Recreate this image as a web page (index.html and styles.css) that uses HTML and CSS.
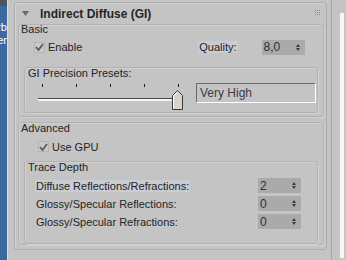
FILE: index.html
```html
<!DOCTYPE html>
<html lang="en">
<head>
    <meta charset="UTF-8">
    <title>Indirect Diffuse (GI)</title>
    <link rel="stylesheet" href="styles.css">
</head>
<body>
    <div class="side">
        <div class="side-top"></div>
        <span class="side-text t1">Verb</span>
        <span class="side-text t2">Ser</span>
    </div>
    <div class="main">
        <div class="rollout">
            <div class="roll-head">
                <svg class="arrow" width="7" height="5" viewBox="0 0 7 5"><path d="M0 0h7L3.5 5z" fill="#6a6a6a"/></svg>
                <span class="roll-title">Indirect Diffuse (GI)</span>
                <svg class="grip" width="6" height="6" viewBox="0 0 6 6" fill="#8c8c8c">
                    <rect x="0" y="0" width="1" height="1"/><rect x="2" y="0" width="1" height="1"/><rect x="4" y="0" width="1" height="1"/>
                    <rect x="0" y="2" width="1" height="1"/><rect x="2" y="2" width="1" height="1"/><rect x="4" y="2" width="1" height="1"/>
                    <rect x="0" y="4" width="1" height="1"/><rect x="2" y="4" width="1" height="1"/><rect x="4" y="4" width="1" height="1"/>
                </svg>
            </div>

            <div class="group basic">
                <div class="group-title">Basic</div>
                <div class="row">
                    <label class="check enable">
                        <span class="box"><svg width="9" height="8" viewBox="0 0 9 8"><path d="M1 4l2.5 3L8 1" stroke="#5a5a5a" stroke-width="1.8" fill="none"/></svg></span>
                        Enable
                    </label>
                    <span class="label hl quality">Quality:</span>
                    <span class="spinner">8,0<span class="updown"><i class="up"></i><i class="down"></i></span></span>
                </div>
                <div class="group presets">
                    <div class="group-title">GI Precision Presets:</div>
                    <div class="preset-row">
                        <div class="slider">
                            <div class="ticks"><i></i><i></i><i></i><i></i><i></i></div>
                            <div class="track"></div>
                            <svg class="thumb" width="11" height="20" viewBox="0 0 11 20">
                                <path d="M0.5 19.5V5.5L5.5 0.5L10.5 5.5V19.5Z" fill="#d8d4cb" stroke="#3a3a3a"/>
                                <path d="M1.5 18.5V6L5.5 2" stroke="#ffffff" fill="none"/>
                            </svg>
                        </div>
                        <div class="textbox">Very High</div>
                    </div>
                </div>
            </div>

            <div class="group advanced">
                <div class="group-title">Advanced</div>
                <label class="check gpu">
                    <span class="box"><svg width="9" height="8" viewBox="0 0 9 8"><path d="M1 4l2.5 3L8 1" stroke="#5a5a5a" stroke-width="1.8" fill="none"/></svg></span>
                    Use GPU
                </label>
                <div class="group trace">
                    <div class="group-title">Trace Depth</div>
                    <div class="trace-rows">
                        <div class="trace-row">
                            <span class="label hl">Diffuse Reflections/Refractions:</span>
                            <span class="spinner">2<span class="updown"><i class="up"></i><i class="down"></i></span></span>
                        </div>
                        <div class="trace-row">
                            <span class="label">Glossy/Specular Reflections:</span>
                            <span class="spinner">0<span class="updown"><i class="up"></i><i class="down"></i></span></span>
                        </div>
                        <div class="trace-row">
                            <span class="label">Glossy/Specular Refractions:</span>
                            <span class="spinner">0<span class="updown"><i class="up"></i><i class="down"></i></span></span>
                        </div>
                    </div>
                </div>
            </div>
        </div>
    </div>
    <div class="scroll">
        <div class="scroll-thumb"></div>
    </div>
</body>
</html>
```

FILE: styles.css
```css
body {
    margin: 0;
    width: 346px;
    height: 260px;
    display: flex;
    background: #c4c4c4;
    font-family: "Liberation Sans", Arial, sans-serif;
    font-size: 11px;
    color: #222428;
    overflow: hidden;
}
.side {
    position: relative;
    width: 7px;
    flex: none;
    background: #3b6aa0;
    border-right: 1px solid #dcdcdc;
    overflow: hidden;
}
.side-top {
    height: 6px;
    background: #4b5562;
}
.side-text {
    position: absolute;
    right: 0;
    color: #ffffff;
    font-size: 11px;
    white-space: nowrap;
}
.t1 { top: 21px; }
.t2 { top: 34px; }
.main {
    flex: 1;
    padding: 2px 0 0 6px;
}
.rollout {
    height: 246px;
    border: 1px solid #adadad;
    border-radius: 3px;
    box-shadow: inset 1px 1px 0 #d2d2d2;
    padding: 0 2px 0 3px;
}
.roll-head {
    height: 21px;
    display: flex;
    align-items: center;
    padding-left: 4px;
}
.arrow { margin-right: 11px; margin-top: -1px; }
.roll-title {
    font-weight: bold;
    font-size: 12px;
    color: #262626;
    flex: 1;
}
.grip { margin-right: 3px; margin-top: -2px; }

.group {
    border: 1px solid #b2b2b2;
    border-radius: 3px;
    box-shadow: inset 1px 1px 0 #d0d0d0, 1px 1px 0 #d0d0d0;
}
.group-title {
    height: 11px;
    line-height: 11px;
    padding-left: 2px;
}
.basic {
    height: 91px;
}
.basic > .group-title { margin-top: -1px; }
.row {
    display: flex;
    align-items: center;
    height: 16px;
    margin-top: 4px;
}
.check {
    display: flex;
    align-items: center;
}
.box {
    width: 9px;
    height: 9px;
    margin-right: 3px;
    display: flex;
    align-items: center;
    justify-content: center;
    background: #c9c9c9;
    border: 1px solid #b4b4b4;
}
.enable { margin-left: 15px; }
.label { padding: 0 1px; }
.hl { background: #c9ccd2; }
.quality { margin-left: 116px; }
.spinner {
    display: flex;
    align-items: center;
    justify-content: space-between;
    width: 43px;
    height: 15px;
    padding-left: 2px;
    box-sizing: border-box;
    background: #aaaaaa;
    color: #2e2e34;
    font-size: 12px;
}
.row .spinner { margin-left: 24px; }
.updown {
    display: flex;
    flex-direction: column;
    gap: 1px;
    margin-right: 5px;
}
.updown i {
    width: 0;
    height: 0;
    border-left: 2.5px solid transparent;
    border-right: 2.5px solid transparent;
}
.updown .up { border-bottom: 3px solid #3c3c3c; }
.updown .down { border-top: 3px solid #3c3c3c; }

.presets {
    height: 44px;
    margin: 12px 5px 0 5px;
}
.presets > .group-title { padding-left: 3px; }
.preset-row {
    display: flex;
    margin-top: 5px;
}
.slider {
    position: relative;
    width: 150px;
    margin-left: 11px;
    height: 28px;
}
.ticks {
    display: flex;
    justify-content: space-between;
    padding: 0 7px 0 6px;
}
.ticks i {
    width: 1px;
    height: 3px;
    background: #1c1c1c;
}
.track {
    margin: 11px 8px 0 2px;
    height: 1px;
    border-top: 1px solid #4a4a4a;
    border-bottom: 1px solid #f4f4f4;
    background: #f4f4f4;
}
.thumb {
    position: absolute;
    left: 136px;
    top: 6px;
}
.textbox {
    width: 115px;
    height: 18px;
    margin-left: 10px;
    margin-top: -1px;
    border: 1px solid;
    border-color: #6c6c6c #ffffff #ffffff #6c6c6c;
    padding-left: 3px;
    line-height: 18px;
    font-size: 12px;
    color: #3c3c44;
}

.advanced {
    height: 121px;
    margin-top: 5px;
}
.gpu {
    margin: 6px 0 0 19px;
    height: 13px;
}
.trace {
    height: 81px;
    margin: 8px 5px 0 5px;
}
.trace > .group-title { padding-left: 3px; }
.trace-rows {
    display: flex;
    flex-direction: column;
    gap: 3px;
    margin: 5px 16px 0 10px;
}
.trace-row {
    display: flex;
    align-items: center;
    justify-content: space-between;
    height: 15px;
}

.scroll {
    width: 15px;
    flex: none;
    display: flex;
    padding-top: 13px;
    padding-left: 8px;
    border-left: 1px solid #a6a6a6;
    margin-left: 4px;
    box-sizing: border-box;
}
.scroll-thumb {
    width: 4px;
    height: 245px;
    background: #f6f6f6;
}
```
